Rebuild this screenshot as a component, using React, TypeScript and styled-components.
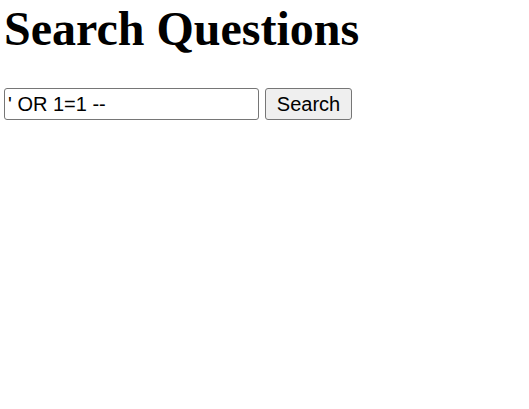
import React from "react";
import styled, { createGlobalStyle } from "styled-components";

const Global = createGlobalStyle`
  html, body { margin: 0; padding: 0; background: #fff; }
  body { font-family: "Liberation Serif", "Times New Roman", serif; }
`;

const Page = styled.div`
  padding: 2px 4px;
`;

const Title = styled.h1`
  margin: 0 0 33px 0;
  font-family: "Liberation Serif", "Times New Roman", serif;
  font-weight: bold;
  font-size: 48px;
  line-height: 53px;
  color: #000;
`;

const Form = styled.form`
  display: flex;
  align-items: center;
  gap: 6px;
`;

const Input = styled.input`
  box-sizing: border-box;
  width: 255px;
  height: 32px;
  margin: 0;
  padding: 1px 3px;
  border: 1px solid #767676;
  border-radius: 3px;
  font-family: "Liberation Sans", Arial, sans-serif;
  font-size: 20px;
  color: #000;
  background: #fff;
  outline: none;
`;

const Button = styled.button`
  box-sizing: border-box;
  width: 87px;
  height: 32px;
  margin: 0;
  padding: 1px 9px;
  border: 1px solid #767676;
  border-radius: 3px;
  background: #efefef;
  font-family: "Liberation Sans", Arial, sans-serif;
  font-size: 20px;
  color: #000;
`;

export default function App() {
  return (
    <Page>
      <Global />
      <Title>Search Questions</Title>
      <Form onSubmit={(e) => e.preventDefault()}>
        <Input type="text" defaultValue="' OR 1=1 --" />
        <Button type="submit">Search</Button>
      </Form>
    </Page>
  );
}
